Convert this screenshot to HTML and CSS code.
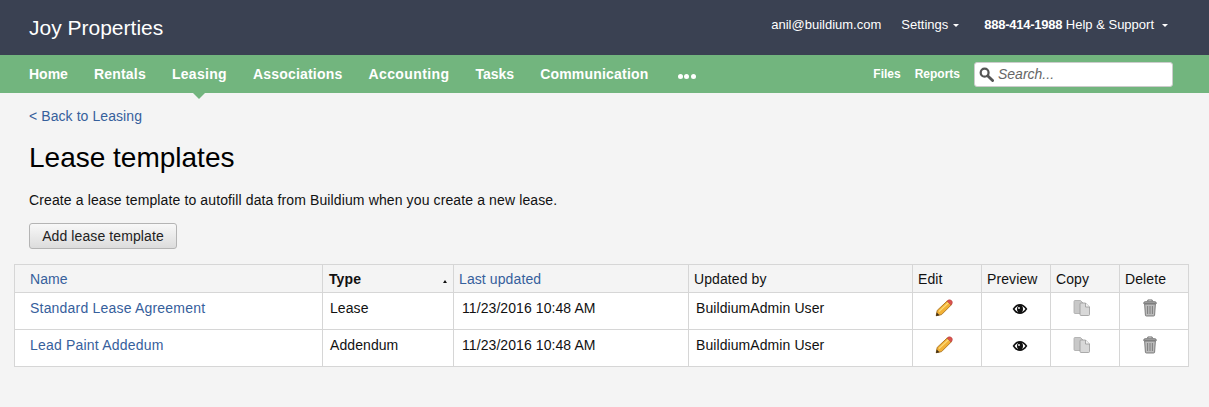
FILE: index.html
```html
<!DOCTYPE html>
<html lang="en">
<head>
<meta charset="utf-8">
<title>Lease templates</title>
<link rel="stylesheet" href="styles.css">
</head>
<body>
<header class="topbar">
  <div class="brand">Joy Properties</div>
  <div class="account">
    <span class="email">anil@buildium.com</span>
    <span class="settings">Settings<i class="caret"></i></span>
    <span class="support"><b>888-414-1988</b> Help &amp; Support<i class="caret caret-wide"></i></span>
  </div>
</header>
<nav class="navbar">
  <ul class="nav-main">
    <li class="tight">Home</li>
    <li>Rentals</li>
    <li class="active">Leasing</li>
    <li>Associations</li>
    <li class="wide">Accounting</li>
    <li class="tight">Tasks</li>
    <li>Communication</li>
    <li class="more"><i></i><i></i><i></i></li>
  </ul>
  <div class="nav-side">
    <span>Files</span>
    <span>Reports</span>
    <div class="search">
      <svg class="search-icon" viewBox="0 0 16 16" width="15" height="15"><circle cx="6" cy="6" r="4.2" fill="none" stroke="#555" stroke-width="2.4"/><path d="M9.5 9.5L14.5 14.5" stroke="#555" stroke-width="3" stroke-linecap="round"/></svg>
      <span class="placeholder">Search...</span>
    </div>
  </div>
</nav>
<main class="content">
  <a class="back" href="#">&lt; Back to Leasing</a>
  <h1>Lease templates</h1>
  <p class="intro">Create a lease template to autofill data from Buildium when you create a new lease.</p>
  <button class="btn" type="button">Add lease template</button>
  <table class="grid">
    <colgroup>
      <col class="c-name"><col class="c-type"><col class="c-date"><col class="c-by"><col class="c-act"><col class="c-act"><col class="c-act"><col class="c-act">
    </colgroup>
    <thead>
      <tr>
        <th class="th-name"><a href="#">Name</a></th>
        <th class="th-type"><div class="sorted"><b>Type</b><i class="sort-up"></i></div></th>
        <th><a href="#">Last updated</a></th>
        <th>Updated by</th>
        <th>Edit</th>
        <th>Preview</th>
        <th>Copy</th>
        <th>Delete</th>
      </tr>
    </thead>
    <tbody>
      <tr>
        <td class="td-name"><a href="#">Standard Lease Agreement</a></td>
        <td class="td-type">Lease</td>
        <td class="td-date">11/23/2016 10:48 AM</td>
        <td class="td-meta">BuildiumAdmin User</td>
        <td class="icon-cell ic-edit"><svg viewBox="0 0 18 18" width="18" height="18"><use href="#pencil"/></svg></td>
        <td class="icon-cell ic-eye"><svg viewBox="0 0 16 12" width="16" height="12"><use href="#eye"/></svg></td>
        <td class="icon-cell ic-copy"><svg viewBox="0 0 18 18" width="18" height="18"><use href="#copy"/></svg></td>
        <td class="icon-cell ic-trash"><svg viewBox="0 0 16 18" width="16" height="18"><use href="#trash"/></svg></td>
      </tr>
      <tr>
        <td class="td-name"><a href="#">Lead Paint Addedum</a></td>
        <td class="td-type">Addendum</td>
        <td class="td-date">11/23/2016 10:48 AM</td>
        <td class="td-meta">BuildiumAdmin User</td>
        <td class="icon-cell ic-edit"><svg viewBox="0 0 18 18" width="18" height="18"><use href="#pencil"/></svg></td>
        <td class="icon-cell ic-eye"><svg viewBox="0 0 16 12" width="16" height="12"><use href="#eye"/></svg></td>
        <td class="icon-cell ic-copy"><svg viewBox="0 0 18 18" width="18" height="18"><use href="#copy"/></svg></td>
        <td class="icon-cell ic-trash"><svg viewBox="0 0 16 18" width="16" height="18"><use href="#trash"/></svg></td>
      </tr>
    </tbody>
  </table>
</main>
<svg class="defs" width="0" height="0" aria-hidden="true">
  <defs>
    <g id="pencil">
      <path d="M1.2 16.8L2.2 11.4L12.4 1.8L16.4 5.8L6.6 15.6Z" fill="#f2b135" stroke="#a9701c" stroke-width=".9" stroke-linejoin="round"/>
      <path d="M4 12.6L13.6 3.5" stroke="#fbdc7d" stroke-width="1.3"/>
      <path d="M12.1 2.2C13.2.6 15.2.4 16.5 1.6C17.8 3 17.6 4.8 16 6.1Z" fill="#d9534f" stroke="#b53b38" stroke-width=".5"/>
      <path d="M1 17L1.7 13.6L4.6 16.2Z" fill="#3d2f1a"/>
    </g>
    <g id="eye">
      <path d="M.6 6C3 2.4 5.4 1 8 1S13 2.4 15.4 6C13 9.6 10.6 11 8 11S3 9.6.6 6Z" fill="#111"/>
      <path d="M2.6 6C4.2 4.2 5 3.4 6 3C4.8 4.8 4.8 7.2 6 9C5 8.6 4.2 7.8 2.6 6ZM10 3C11 3.4 11.8 4.2 13.4 6C11.8 7.8 11 8.6 10 9C11.2 7.2 11.2 4.8 10 3Z" fill="#fff"/>
      <circle cx="8" cy="6" r="2.8" fill="#111"/>
      <circle cx="7" cy="5" r=".9" fill="#fff"/>
    </g>
    <g id="copy">
      <path d="M1 2.5Q1 1.5 2 1.5H7.5L10.5 4.5V13.5Q10.5 14.5 9.5 14.5H2Q1 14.5 1 13.5Z" fill="#c8c8c8" stroke="#aaa" stroke-width=".8"/>
      <path d="M7 5Q7 4 8 4H12.5L16.5 8V15.5Q16.5 16.5 15.5 16.5H8Q7 16.5 7 15.5Z" fill="#d8d8d8" stroke="#999" stroke-width=".8"/>
      <path d="M12.5 4V8H16.5" fill="#f2f2f2" stroke="#999" stroke-width=".8"/>
    </g>
    <g id="trash">
      <path d="M5.8 2.2V1H10.2V2.2" fill="none" stroke="#666" stroke-width="1"/>
      <path d="M1.5 4.5Q1.5 2.5 3.5 2.5H12.5Q14.5 2.5 14.5 4.5Z" fill="#999" stroke="#666" stroke-width=".6"/>
      <path d="M2.6 5H13.4L12.6 16.2Q12.5 17 11.6 17H4.4Q3.5 17 3.4 16.2Z" fill="#bbb" stroke="#666" stroke-width=".8"/>
      <path d="M5.6 7V15M8 7V15M10.4 7V15" stroke="#777" stroke-width=".9"/>
    </g>
  </defs>
</svg>
</body>
</html>
```
FILE: styles.css
```css
* { box-sizing: border-box; }
html, body { margin: 0; padding: 0; }
body {
  background: #f4f4f4;
  color: #111;
  font-family: "Liberation Sans", Arial, sans-serif;
  font-size: 14px;
  height: 407px;
  overflow: hidden;
}
.topbar {
  height: 55px;
  background: #3a4152;
  color: #fff;
  display: flex;
  align-items: center;
  justify-content: space-between;
  padding: 0 41px 0 29px;
}
.brand { font-size: 21px; }
.account {
  display: flex;
  align-items: center;
  font-size: 13px;
  margin-top: -6px;
}
.settings { margin-left: 20px; }
.support { margin-left: 25px; }
.support b { letter-spacing: -0.25px; }
.caret {
  display: inline-block;
  margin-left: 5px;
  vertical-align: 2px;
  border-left: 3.5px solid transparent;
  border-right: 3.5px solid transparent;
  border-top: 3.5px solid #fff;
}
.caret-wide { margin-left: 8px; }
.navbar {
  height: 38px;
  background: #72b57e;
  color: #fff;
  display: flex;
  align-items: center;
  justify-content: space-between;
  padding: 0 36px 0 29px;
}
.nav-main {
  list-style: none;
  margin: 0;
  padding: 0;
  display: flex;
  align-items: center;
  gap: 26px;
  font-size: 14px;
  font-weight: bold;
  letter-spacing: 0.2px;
}
.nav-main .tight { letter-spacing: 0; }
.nav-main .wide { letter-spacing: 0.4px; }
.nav-main .active { letter-spacing: 0.3px; }
.active { position: relative; }
.active::after {
  content: "";
  position: absolute;
  left: 50%;
  margin-left: -6px;
  top: 27px;
  border-left: 6px solid transparent;
  border-right: 6px solid transparent;
  border-top: 6px solid #72b57e;
}
.more { display: flex; gap: 1.5px; margin-left: 3px; padding-top: 4px; }
.more i {
  display: block;
  width: 5px;
  height: 5px;
  border-radius: 50%;
  background: #fff;
}
.nav-side {
  display: flex;
  align-items: center;
  font-size: 12px;
  font-weight: bold;
}
.nav-side > span { margin-right: 14px; }
.search {
  width: 199px;
  height: 25px;
  background: #fff;
  border: 1px solid #ccc;
  border-radius: 3px;
  display: flex;
  align-items: center;
  padding-left: 4px;
  gap: 4px;
}
.search-icon { flex: none; }
.placeholder {
  color: #666;
  font-weight: normal;
  font-style: italic;
  font-size: 14px;
}
.content { padding: 15px 20px 0 14px; }
.back {
  display: block;
  margin-left: 15px;
  line-height: 16px;
  height: 16px;
  letter-spacing: 0.08px;
}
a { color: #36609c; text-decoration: none; }
h1 {
  font-size: 28px;
  font-weight: normal;
  margin: 18px 0 0 15px;
  line-height: 32px;
  color: #000;
}
.intro {
  margin: 17px 0 0 15px;
  line-height: 18px;
  letter-spacing: 0.12px;
}
.btn {
  display: block;
  margin: 14px 0 0 15px;
  width: 148px;
  height: 26px;
  padding: 0;
  font: inherit;
  letter-spacing: 0.1px;
  color: #222;
  border: 1px solid #b4b4b4;
  border-radius: 3px;
  background: linear-gradient(#f8f8f8, #dcdcdc);
}
.grid {
  margin-top: 15px;
  width: 1175px;
  table-layout: fixed;
  border-collapse: collapse;
  border: 1px solid #d6d6d6;
}
.c-name { width: 308px; }
.c-type { width: 131px; }
.c-date { width: 235px; }
.c-by { width: 224px; }
.c-act { width: 69px; }
.grid th, .grid td {
  border: 1px solid #d6d6d6;
  padding: 0;
}
.grid th {
  height: 28px;
  font-weight: normal;
  text-align: left;
  padding-left: 5px;
  background: #f4f4f4;
  letter-spacing: 0.1px;
}
.grid .th-name { padding-left: 15px; }
.grid .th-type { padding-left: 6px; padding-right: 6px; }
.sorted { display: flex; align-items: center; justify-content: space-between; }
.sort-up {
  margin-top: 5px;
  border-left: 2.5px solid transparent;
  border-right: 2.5px solid transparent;
  border-bottom: 3px solid #111;
}
.grid td {
  height: 37px;
  background: #fff;
  vertical-align: top;
  padding-top: 7px;
  line-height: 16px;
  letter-spacing: 0.08px;
}
.grid .td-name { padding-left: 15px; letter-spacing: 0.2px; }
.grid .td-type { padding-left: 7px; }
.grid .td-date { padding-left: 8px; }
.grid .td-meta { padding-left: 7px; }
.grid .icon-cell { text-align: center; padding-top: 6px; }
.grid .ic-edit { padding-right: 6px; }
.grid .ic-eye { padding-left: 7px; padding-top: 10px; }
.grid .ic-copy { padding-right: 6px; }
.grid .ic-trash { padding-right: 8px; }
.icon-cell svg { display: inline-block; vertical-align: top; }
.defs { position: absolute; }
```
